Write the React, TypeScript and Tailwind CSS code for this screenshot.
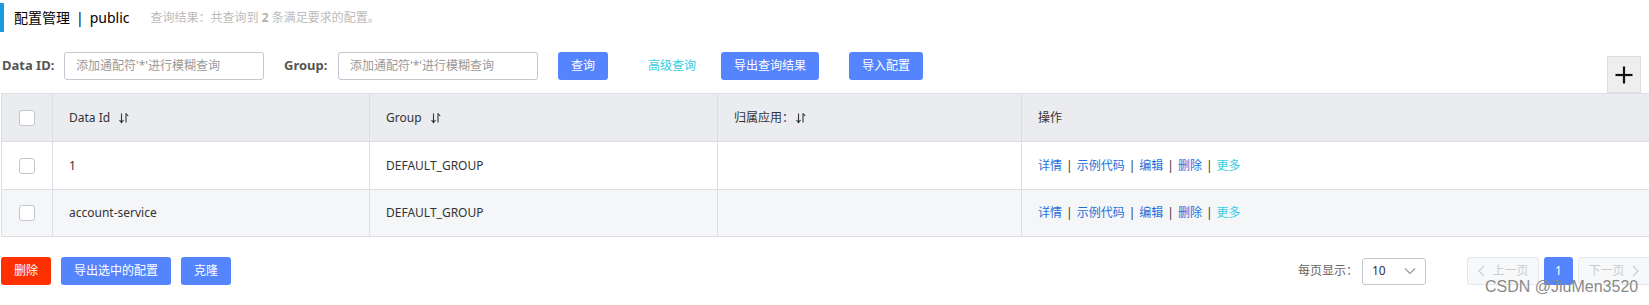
import React from "react";

const SortIcon = ({ ml = "ml-[8px]" }: { ml?: string }) => (
  <svg width="12" height="12" viewBox="0 0 12 12" className={`${ml} inline-block`} fill="none" stroke="#333" strokeWidth="1.1">
    <path d="M3.5 1.5 V10.5" />
    <path d="M1.5 8 L3.5 10.5 L5.5 8" />
    <path d="M8 10.5 V1.5" />
    <path d="M8 1.5 L10.2 4" />
  </svg>
);

const Checkbox = () => (
  <div className="w-[16px] h-[16px] rounded-[3px] border border-[#c4c6cf] bg-white" />
);

const Sep = () => <span className="mx-[4px] text-[#333]">|</span>;

const Ops = () => (
  <div className="flex items-center text-[12px] text-[#1e6fd9]">
    <span>详情</span>
    <Sep />
    <span>示例代码</span>
    <Sep />
    <span>编辑</span>
    <Sep />
    <span>删除</span>
    <Sep />
    <span className="text-[#33cde5]">更多</span>
  </div>
);

const cols = ["w-[51px]", "w-[317px]", "w-[348px]", "w-[304px]", "flex-1"];

function Row({ bg, h, cells }: { bg: string; h: string; cells: React.ReactNode[] }) {
  return (
    <div className={`flex ${h} border-b border-[#dcdee3] ${bg}`}>
      {cells.map((c, i) => (
        <div
          key={i}
          className={`${cols[i]} shrink-0 flex items-center ${i === 0 ? "justify-center" : "pl-[16px]"} ${i < 4 ? "border-r border-[#dcdee3]" : ""} text-[12px] text-[#333]`}
        >
          {c}
        </div>
      ))}
    </div>
  );
}

export default function App() {
  return (
    <div
      className="relative w-[1649px] h-[305px] bg-white overflow-hidden"
      style={{ fontFamily: '"Noto Sans", "Noto Sans CJK SC", sans-serif' }}
    >
      {/* Title */}
      <div className="pt-[3px]">
        <div className="flex items-center h-[29px] border-l-[4px] border-[#1a9be0] pl-[10px]">
          <span className="text-[14px] text-black leading-none">配置管理</span>
          <span className="text-[14px] text-black mx-[6px] leading-none">|</span>
          <span className="text-[14px] text-black leading-none">public</span>
          <span className="ml-[21px] text-[12px] text-[#bbbbbb] leading-none">
            查询结果：共查询到 <span className="font-semibold text-[#aaa]">2</span> 条满足要求的配置。
          </span>
        </div>
      </div>

      {/* Toolbar */}
      <div className="flex items-start mt-[20px] h-[41px]">
        <div className="flex items-center h-[28px]">
          <div className="w-[64px] pl-[2px] text-[13px] font-bold text-[#555]">Data ID:</div>
          <div className="w-[200px] h-[28px] border border-[#c4c6cf] rounded-[3px] flex items-center pl-[11px] text-[12px] text-[#999]">
            添加通配符'*'进行模糊查询
          </div>
          <div className="ml-[20px] w-[54px] text-[13px] font-bold text-[#555]">Group:</div>
          <div className="w-[200px] h-[28px] border border-[#c4c6cf] rounded-[3px] flex items-center pl-[11px] text-[12px] text-[#999]">
            添加通配符'*'进行模糊查询
          </div>
          <div className="ml-[20px] w-[50px] h-[28px] rounded-[3px] bg-[#5584ff] text-white text-[12px] flex items-center justify-center">
            查询
          </div>
          <div className="ml-[40px] text-[12px] text-[#33cde5]">高级查询</div>
          <div className="ml-[25px] w-[98px] h-[28px] rounded-[3px] bg-[#5584ff] text-white text-[12px] flex items-center justify-center">
            导出查询结果
          </div>
          <div className="ml-[30px] w-[74px] h-[28px] rounded-[3px] bg-[#5584ff] text-white text-[12px] flex items-center justify-center">
            导入配置
          </div>
        </div>
        <div className="ml-auto mr-[8px] mt-[4px] w-[34px] h-[37px] bg-[#eeeeee] border border-[#dddddd] flex items-center justify-center">
          <svg width="20" height="20" viewBox="0 0 20 20" stroke="#111" strokeWidth="2.2">
            <path d="M10 1.5 V18.5" />
            <path d="M1.5 10 H18.5" />
          </svg>
        </div>
      </div>

      {/* Table */}
      <div className="ml-[1px] border-t border-l border-[#dcdee3]">
        <Row
          bg="bg-[#ebecf0]"
          h="h-[48px]"
          cells={[
            <Checkbox />,
            <span className="flex items-center">Data Id<SortIcon /></span>,
            <span className="flex items-center">Group<SortIcon /></span>,
            <span className="flex items-center">归属应用：<SortIcon ml="ml-[1px]" /></span>,
            <span>操作</span>,
          ]}
        />
        <Row
          bg="bg-white"
          h="h-[48px]"
          cells={[<Checkbox />, <span>1</span>, <span>DEFAULT_GROUP</span>, <span />, <Ops />]}
        />
        <Row
          bg="bg-[#f5f6f8]"
          h="h-[47px]"
          cells={[<Checkbox />, <span>account-service</span>, <span>DEFAULT_GROUP</span>, <span />, <Ops />]}
        />
      </div>

      {/* Footer */}
      <div className="flex items-center mt-[20px] h-[28px] pl-[1px] mr-[-1px]">
        <div className="w-[50px] h-[28px] rounded-[3px] bg-[#ff3000] text-white text-[12px] flex items-center justify-center">
          删除
        </div>
        <div className="ml-[10px] w-[110px] h-[28px] rounded-[3px] bg-[#5584ff] text-white text-[12px] flex items-center justify-center">
          导出选中的配置
        </div>
        <div className="ml-[10px] w-[50px] h-[28px] rounded-[3px] bg-[#5584ff] text-white text-[12px] flex items-center justify-center">
          克隆
        </div>
        <div className="ml-auto flex items-center">
          <span className="text-[12px] text-[#666]">每页显示：</span>
          <div className="ml-[4px] w-[64px] h-[27px] border border-[#c4c6cf] rounded-[3px] flex items-center pl-[9px] pr-[8px] justify-between">
            <span className="text-[12px] text-[#333]">10</span>
            <svg width="14" height="10" viewBox="0 0 14 10" fill="none" stroke="#999" strokeWidth="1.2">
              <path d="M2 2.5 L7 7.5 L12 2.5" />
            </svg>
          </div>
          <div className="ml-[41px] w-[72px] h-[28px] rounded-[3px] border border-[#e6e7eb] bg-[#f7f8fa] flex items-center justify-center text-[12px] text-[#cccccc]">
            <svg width="10" height="12" viewBox="0 0 10 12" fill="none" stroke="#cccccc" strokeWidth="1.2" className="mr-[5px]">
              <path d="M7 1 L2 6 L7 11" />
            </svg>
            上一页
          </div>
          <div className="ml-[5px] w-[29px] h-[28px] rounded-[3px] bg-[#5584ff] text-white text-[12px] flex items-center justify-center">
            1
          </div>
          <div className="ml-[5px] w-[72px] h-[28px] rounded-[3px] border border-[#e6e7eb] bg-[#f7f8fa] flex items-center justify-center text-[12px] text-[#cccccc]">
            下一页
            <svg width="10" height="12" viewBox="0 0 10 12" fill="none" stroke="#cccccc" strokeWidth="1.2" className="ml-[5px]">
              <path d="M3 1 L8 6 L3 11" />
            </svg>
          </div>
        </div>
      </div>

      {/* Watermark */}
      <div
        className="absolute left-[1485px] top-[279px] text-[16px] leading-[16px] text-[#8a8a8a] whitespace-nowrap"
        style={{ fontFamily: '"Liberation Sans", Arial, sans-serif' }}
      >
        CSDN @JiuMen3520
      </div>
    </div>
  );
}
